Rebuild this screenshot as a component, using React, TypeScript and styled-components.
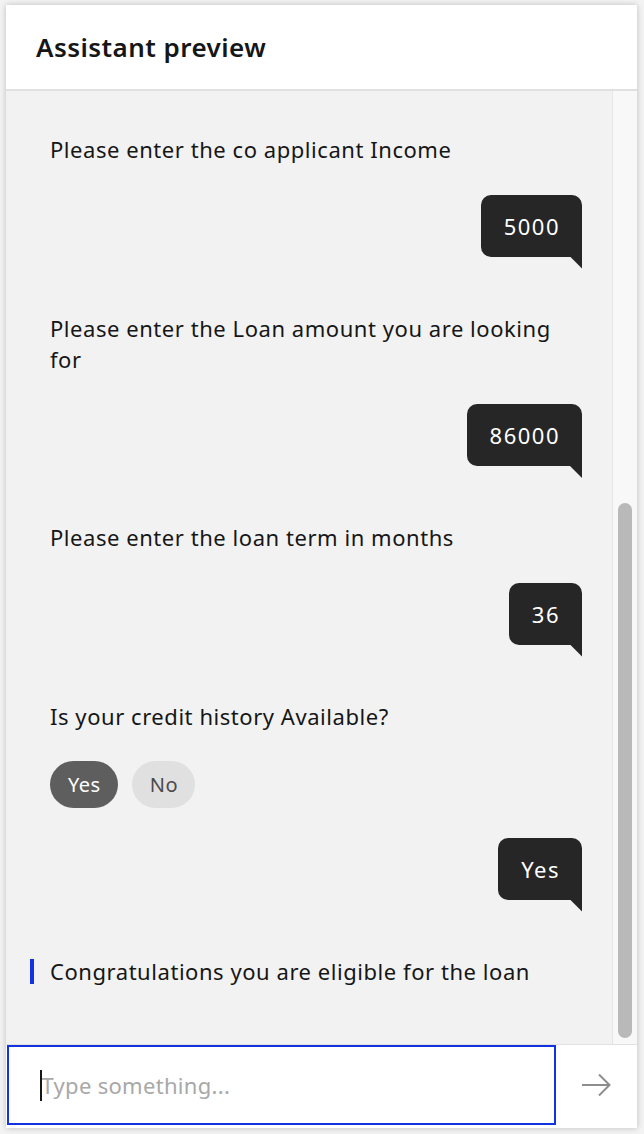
import React from "react";
import styled, { createGlobalStyle } from "styled-components";

const GlobalStyle = createGlobalStyle`
  html, body {
    margin: 0;
    padding: 0;
    background: #f3f3f3;
  }
  body {
    font-family: "Noto Sans", "Roboto", sans-serif;
  }
  * { box-sizing: border-box; }
`;

const Panel = styled.div`
  margin: 5px 7px 6px 6px;
  width: 631px;
  height: 1123px;
  background: #ffffff;
  box-shadow: 0 0 6px rgba(0, 0, 0, 0.22);
  display: flex;
  flex-direction: column;
  overflow: hidden;
`;

const Header = styled.header`
  height: 86px;
  flex: none;
  display: flex;
  align-items: center;
  padding: 0 0 0 30px;
  border-bottom: 2px solid #e0e0e0;
  background: #ffffff;
`;

const Title = styled.h1`
  margin: 0;
  font-family: "Noto Sans", "Roboto", sans-serif;
  font-size: 26px;
  font-weight: 600;
  color: #161616;
  letter-spacing: 0.45px;
`;

const ChatArea = styled.div`
  flex: 1;
  display: flex;
  background: #f2f2f2;
  min-height: 0;
`;

const MessageList = styled.div`
  flex: 1;
  display: flex;
  flex-direction: column;
  gap: 56px;
  padding: 43px 30px 0 44px;
`;

const Group = styled.div`
  display: flex;
  flex-direction: column;
  gap: 29.5px;
`;

const BotText = styled.p`
  margin: 0;
  font-size: 22px;
  line-height: 31px;
  color: #161616;
  letter-spacing: 0.55px;
  max-width: 520px;
`;

const UserRow = styled.div`
  display: flex;
  justify-content: flex-end;
`;

const Bubble = styled.div`
  position: relative;
  height: 62px;
  padding: 0 22px 0 23px;
  display: flex;
  align-items: center;
  background: #262626;
  color: #ffffff;
  font-size: 22px;
  letter-spacing: 1.5px;
  border-radius: 10px 10px 0 10px;

  &::after {
    content: "";
    position: absolute;
    right: 0;
    top: 100%;
    width: 12px;
    height: 12px;
    background: #262626;
    clip-path: polygon(0 0, 100% 0, 100% 100%);
  }
`;

const Options = styled.div`
  display: flex;
  gap: 14px;
`;

const OptionButton = styled.button<{ $selected?: boolean }>`
  height: 47px;
  padding: 0 17px 0 18px;
  border: none;
  border-radius: 24px;
  font-family: "Noto Sans", "Roboto", sans-serif;
  font-size: 20px;
  letter-spacing: 0.5px;
  background: ${(p) => (p.$selected ? "#5e5e5e" : "#e0e0e0")};
  color: ${(p) => (p.$selected ? "#ffffff" : "#4a4a4a")};
  cursor: pointer;
`;

const Notice = styled.div`
  display: flex;
  align-items: center;
  gap: 16px;
  margin-left: -20px;
`;

const NoticeBar = styled.span`
  width: 4px;
  height: 25px;
  background: #1233e2;
  flex: none;
`;

const ScrollTrack = styled.div<{ $offset: number }>`
  width: 25px;
  flex: none;
  background: #f8f8f8;
  border-left: 1px solid #e6e6e6;
  display: flex;
  flex-direction: column;
  padding: ${(p) => p.$offset}px 5px 6px 5px;
`;

const ScrollThumb = styled.div`
  flex: 1;
  background: #b9b9b9;
  border-radius: 7px;
`;

const Footer = styled.div`
  height: 84px;
  flex: none;
  display: flex;
  align-items: flex-start;
  padding-left: 1px;
  border-top: 1px solid #e0e0e0;
  background: #ffffff;
`;

const InputBox = styled.div`
  width: 549px;
  height: 80px;
  border: 2px solid #1233e2;
  display: flex;
  align-items: center;
  padding-left: 31px;
  background: #ffffff;
`;

const Caret = styled.span`
  width: 1.5px;
  height: 31px;
  background: #161616;
  flex: none;
`;

const TextInput = styled.input`
  flex: 1;
  border: none;
  outline: none;
  background: transparent;
  font-family: "Noto Sans", "Roboto", sans-serif;
  font-size: 22px;
  letter-spacing: 0.3px;
  color: #161616;
  padding: 0;
  caret-color: transparent;

  &::placeholder {
    color: #a8a8a8;
  }
`;

const SendButton = styled.button`
  flex: 1;
  height: 83px;
  border: none;
  background: #ffffff;
  display: flex;
  align-items: center;
  justify-content: center;
  padding: 0 2px 4px 0;
  cursor: pointer;
`;

const ArrowIcon = () => (
  <svg width="30" height="24" viewBox="0 0 30 24" fill="none">
    <path d="M1 12H28" stroke="#8d8d8d" strokeWidth="2" />
    <path d="M18 1.5L28.5 12L18 22.5" stroke="#8d8d8d" strokeWidth="2" />
  </svg>
);

const conversation = [
  { bot: "Please enter the co applicant Income", user: "5000" },
  { bot: "Please enter the Loan amount you are looking for", user: "86000" },
  { bot: "Please enter the loan term in months", user: "36" },
];

export default function App() {
  return (
    <>
      <GlobalStyle />
      <Panel>
        <Header>
          <Title>Assistant preview</Title>
        </Header>
        <ChatArea>
          <MessageList>
            {conversation.map((c) => (
              <Group key={c.user}>
                <BotText>{c.bot}</BotText>
                <UserRow>
                  <Bubble>{c.user}</Bubble>
                </UserRow>
              </Group>
            ))}
            <Group>
              <BotText>Is your credit history Available?</BotText>
              <Options>
                <OptionButton $selected>Yes</OptionButton>
                <OptionButton>No</OptionButton>
              </Options>
              <UserRow>
                <Bubble>Yes</Bubble>
              </UserRow>
            </Group>
            <Notice>
              <NoticeBar />
              <BotText>Congratulations you are eligible for the loan</BotText>
            </Notice>
          </MessageList>
          <ScrollTrack $offset={412}>
            <ScrollThumb />
          </ScrollTrack>
        </ChatArea>
        <Footer>
          <InputBox>
            <Caret />
            <TextInput placeholder="Type something..." />
          </InputBox>
          <SendButton aria-label="Send">
            <ArrowIcon />
          </SendButton>
        </Footer>
      </Panel>
    </>
  );
}
